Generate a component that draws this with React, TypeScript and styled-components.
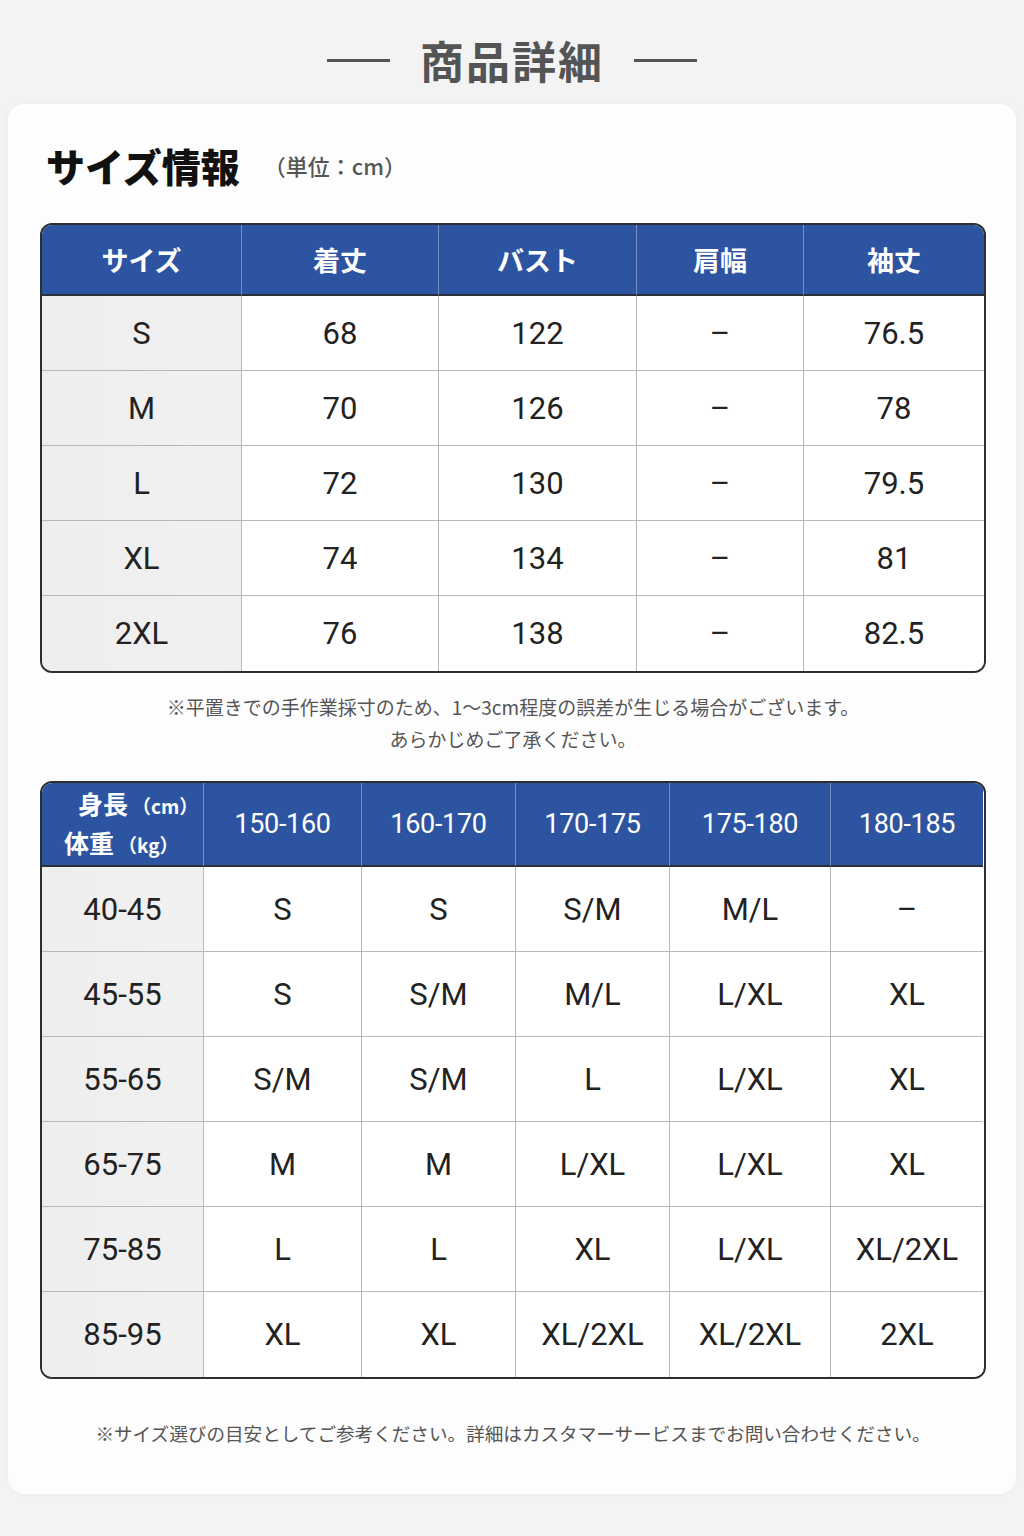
import React from "react";
import styled, { createGlobalStyle } from "styled-components";

const Global = createGlobalStyle`
  html, body { margin: 0; padding: 0; background: #f3f3f3; }
  body { font-family: Roboto, "Noto Sans CJK JP", sans-serif; -webkit-font-smoothing: antialiased; }
`;

const CJK = `"Noto Sans CJK JP", "Noto Sans", sans-serif`;
const NUM = `Roboto, "Noto Sans CJK JP", sans-serif`;

const Page = styled.div`
  width: 1024px;
  min-height: 1536px;
  background: #f3f3f3;
  padding-bottom: 42px;
  box-sizing: border-box;
`;

const TopHeader = styled.header`
  height: 104px;
  padding-top: 16px;
  box-sizing: border-box;
  display: flex;
  align-items: center;
  justify-content: center;
  gap: 30px;
`;

const HeaderLine = styled.span`
  display: block;
  width: 63px;
  height: 3px;
  background: #555;
`;

const PageTitle = styled.h1`
  margin: 0;
  font-family: ${CJK};
  font-size: 44px;
  line-height: 48px;
  font-weight: 700;
  letter-spacing: 2px;
  color: #545454;
`;

const Card = styled.main`
  margin: 0 8px;
  background: #fdfdfd;
  border-radius: 16px;
  box-shadow: 0 0 6px rgba(0, 0, 0, 0.03);
  padding: 41px 30px 46px 32px;
  box-sizing: border-box;
  height: 1390px;
`;

const SectionTitle = styled.div`
  display: flex;
  align-items: center;
  gap: 24px;
  height: 40px;
  padding-left: 6px;
`;

const SectionName = styled.h2`
  margin: 0;
  font-family: ${CJK};
  font-size: 39px;
  line-height: 40px;
  font-weight: 900;
  color: #111;
`;

const Unit = styled.span`
  font-family: ${CJK};
  font-size: 22px;
  color: #555;
  font-weight: 500;
`;

const TableFrame = styled.div<{ $mt: number }>`
  margin-top: ${(p) => p.$mt}px;
  border: 2px solid #2e2e2e;
  border-radius: 12px;
  overflow: hidden;
  background: #fff;
`;

const Grid = styled.div<{ $cols: string }>`
  display: grid;
  grid-template-columns: ${(p) => p.$cols};
`;

const HeadCell = styled.div<{ $first?: boolean; $h: number; $num?: boolean }>`
  height: ${(p) => p.$h}px;
  box-sizing: border-box;
  background: #2d54a0;
  border-bottom: 2px solid #2b2f3a;
  border-left: ${(p) => (p.$first ? "none" : "1px solid rgba(255,255,255,0.35)")};
  display: flex;
  align-items: center;
  justify-content: center;
  color: #fff;
  font-family: ${(p) => (p.$num ? NUM : CJK)};
  font-size: ${(p) => (p.$num ? 27 : 27)}px;
  font-weight: ${(p) => (p.$num ? 400 : 700)};
  letter-spacing: ${(p) => (p.$num ? "-0.3px" : "0")};
`;

const BodyCell = styled.div<{ $first?: boolean; $last?: boolean; $h: number }>`
  height: ${(p) => p.$h}px;
  box-sizing: border-box;
  background: ${(p) => (p.$first ? "linear-gradient(90deg, #eeeeee, #f1f1f1)" : "#fff")};
  border-left: ${(p) => (p.$first ? "none" : "1px solid #b8b8b8")};
  border-bottom: ${(p) => (p.$last ? "none" : "1px solid #b8b8b8")};
  display: flex;
  align-items: center;
  justify-content: center;
  color: #222;
  font-family: ${NUM};
  font-size: 31px;
  font-weight: 400;
`;

const Notes = styled.div`
  margin-top: 18px;
  text-align: center;
  font-family: ${CJK};
  font-size: 19px;
  line-height: 32px;
  color: #555;
`;

const BottomNote = styled.p`
  margin: 39px 0 0;
  text-align: center;
  font-family: ${CJK};
  font-size: 18.6px;
  line-height: 30px;
  color: #555;
`;

const CornerHead = styled.div`
  display: flex;
  flex-direction: column;
  align-items: flex-start;
  justify-content: center;
  width: 100%;
  padding-left: 22px;
  box-sizing: border-box;
`;

const CornerLine = styled.div<{ $indent: number }>`
  margin-left: ${(p) => p.$indent}px;
  display: flex;
  align-items: baseline;
  gap: 4px;
  line-height: 37px;
`;

const CornerMain = styled.span`
  font-family: ${CJK};
  font-size: 25px;
  font-weight: 700;
`;

const CornerUnit = styled.span`
  font-family: ${CJK};
  font-size: 19px;
  font-weight: 700;
`;

const sizeHead = ["サイズ", "着丈", "バスト", "肩幅", "袖丈"];
const sizeRows = [
  ["S", "68", "122", "–", "76.5"],
  ["M", "70", "126", "–", "78"],
  ["L", "72", "130", "–", "79.5"],
  ["XL", "74", "134", "–", "81"],
  ["2XL", "76", "138", "–", "82.5"],
];

const fitHead = ["150-160", "160-170", "170-175", "175-180", "180-185"];
const fitRows = [
  ["40-45", "S", "S", "S/M", "M/L", "–"],
  ["45-55", "S", "S/M", "M/L", "L/XL", "XL"],
  ["55-65", "S/M", "S/M", "L", "L/XL", "XL"],
  ["65-75", "M", "M", "L/XL", "L/XL", "XL"],
  ["75-85", "L", "L", "XL", "L/XL", "XL/2XL"],
  ["85-95", "XL", "XL", "XL/2XL", "XL/2XL", "2XL"],
];

export default function App() {
  return (
    <Page>
      <Global />
      <TopHeader>
        <HeaderLine />
        <PageTitle>商品詳細</PageTitle>
        <HeaderLine />
      </TopHeader>
      <Card>
        <SectionTitle>
          <SectionName>サイズ情報</SectionName>
          <Unit>（単位：cm）</Unit>
        </SectionTitle>

        <TableFrame $mt={38}>
          <Grid $cols="199px 197px 198px 167px 181px">
            {sizeHead.map((h, i) => (
              <HeadCell key={h} $first={i === 0} $h={71}>
                {h}
              </HeadCell>
            ))}
            {sizeRows.map((row, r) =>
              row.map((v, c) => (
                <BodyCell key={`${r}-${c}`} $first={c === 0} $last={r === sizeRows.length - 1} $h={75}>
                  {v}
                </BodyCell>
              ))
            )}
          </Grid>
        </TableFrame>

        <Notes>
          ※平置きでの手作業採寸のため、1〜3cm程度の誤差が生じる場合がございます。
          <br />
          あらかじめご了承ください。
        </Notes>

        <TableFrame $mt={26}>
          <Grid $cols="161px 158px 154px 154px 161px 153px">
            <HeadCell $first $h={84}>
              <CornerHead>
                <CornerLine $indent={14}>
                  <CornerMain>身長</CornerMain>
                  <CornerUnit>（cm）</CornerUnit>
                </CornerLine>
                <CornerLine $indent={0}>
                  <CornerMain>体重</CornerMain>
                  <CornerUnit>（kg）</CornerUnit>
                </CornerLine>
              </CornerHead>
            </HeadCell>
            {fitHead.map((h) => (
              <HeadCell key={h} $h={84} $num>
                {h}
              </HeadCell>
            ))}
            {fitRows.map((row, r) =>
              row.map((v, c) => (
                <BodyCell key={`${r}-${c}`} $first={c === 0} $last={r === fitRows.length - 1} $h={85}>
                  {v}
                </BodyCell>
              ))
            )}
          </Grid>
        </TableFrame>

        <BottomNote>
          ※サイズ選びの目安としてご参考ください。詳細はカスタマーサービスまでお問い合わせください。
        </BottomNote>
      </Card>
    </Page>
  );
}
